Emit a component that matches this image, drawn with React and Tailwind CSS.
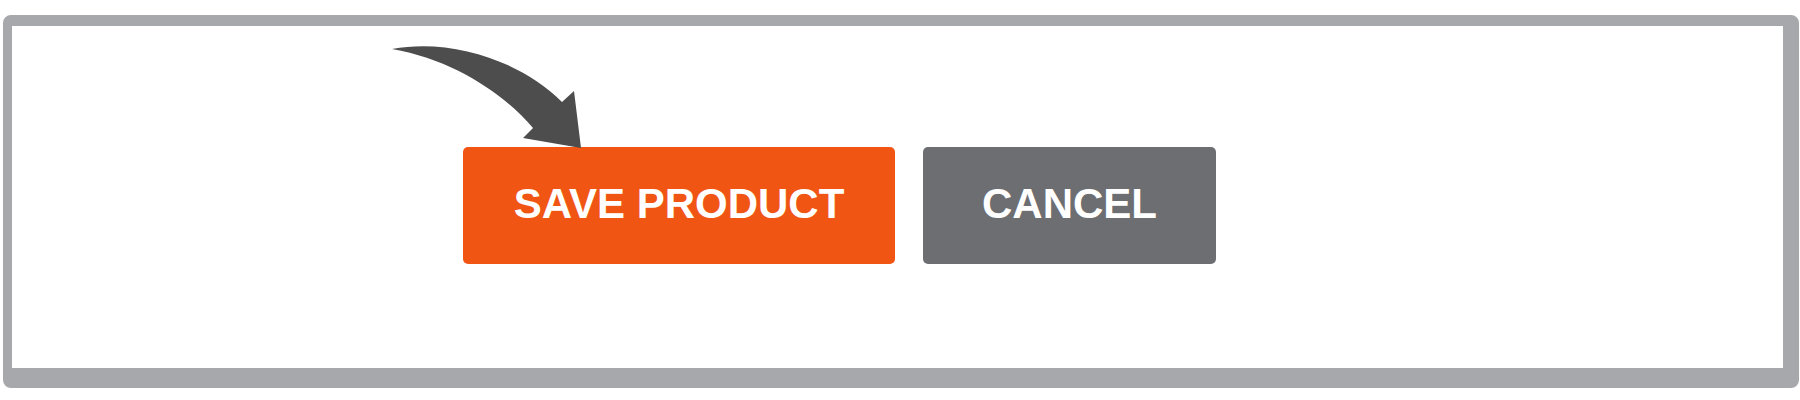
export default function App() {
    return (
        <div className="relative w-[1800px] h-[400px] bg-white font-['Liberation_Sans',Arial,sans-serif]">
            <div className="pt-[15px] pl-[3px]">
                <div className="w-[1796px] h-[373px] bg-white border-t-[11px] border-l-[9px] border-r-[16px] border-b-[20px] border-[#a7a8ab] rounded-[8px]">
                    <div className="flex gap-[28px] pl-[451px] pt-[121px]">
                        <button className="w-[432px] h-[117px] flex items-center justify-center pb-[5px] bg-[#f05514] rounded-[5px] text-white font-bold text-[42px]">
                            SAVE PRODUCT
                        </button>
                        <button className="w-[293px] h-[117px] flex items-center justify-center pb-[5px] bg-[#6d6e71] rounded-[5px] text-white font-bold text-[42px]">
                            CANCEL
                        </button>
                    </div>
                </div>
            </div>

            {/* annotation arrow pointing at the save button */}
            <svg className="absolute left-0 top-0" width="1800" height="400" viewBox="0 0 1800 400">
                <path
                    d="M 392 49 C 450 38, 520 60, 562 102 L 574 91 L 581 148 L 523 138 L 533 128 C 505 95, 455 60, 392 49 Z"
                    fill="#4d4d4d"
                />
            </svg>
        </div>
    );
}
